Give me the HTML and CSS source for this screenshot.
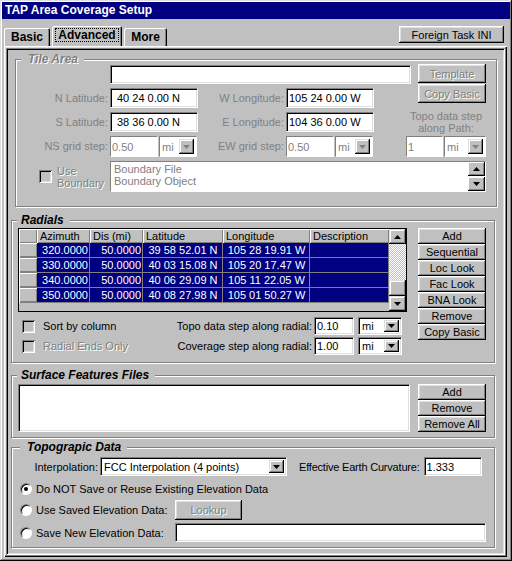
FILE: index.html
```html
<!DOCTYPE html>
<html lang="en">
<head>
    <meta charset="UTF-8">
    <title>TAP Area Coverage Setup</title>
    <link rel="stylesheet" href="styles.css">
</head>
<body>
<div class="window">
    <div class="titlebar">TAP Area Coverage Setup</div>

    <div class="tabbar">
        <div class="tab tab-basic">Basic</div>
        <div class="tab tab-adv active"><span class="focus">Advanced</span></div>
        <div class="tab tab-more">More</div>
        <button class="btn foreign">Foreign Task INI</button>
    </div>

    <div class="tabpage">
        <div class="panel">

            <!-- Tile Area (disabled) -->
            <div class="group tile">
                <div class="group-title off">Tile Area</div>
                <div class="tile-grid">
                    <div class="edit t-top"></div>
                    <button class="btn off t-template">Template</button>
                    <button class="btn off t-copy">Copy Basic</button>

                    <div class="lbl r2 c1">N Latitude:</div>
                    <div class="edit cell-in r2 c2 indent">40 24 0.00 N</div>
                    <div class="lbl r2 c3">W Longitude:</div>
                    <div class="edit cell-in r2 c4">105 24 0.00 W</div>

                    <div class="lbl r3 c1">S Latitude:</div>
                    <div class="edit cell-in r3 c2 indent">38 36 0.00 N</div>
                    <div class="lbl r3 c3">E Longitude:</div>
                    <div class="edit cell-in r3 c4">104 36 0.00 W</div>
                    <div class="t-path-label">Topo data step<br>along Path:</div>

                    <div class="lbl r4 c1">NS grid step:</div>
                    <div class="pair r4 c2">
                        <div class="edit dis w48">0.50</div>
                        <div class="combo dis w38"><span>mi</span><span class="drop"><svg width="7" height="4"><polygon points="0,0 7,0 3.5,4"/></svg></span></div>
                    </div>
                    <div class="lbl r4 c3">EW grid step:</div>
                    <div class="pair r4 c4">
                        <div class="edit dis w48">0.50</div>
                        <div class="combo dis w38"><span>mi</span><span class="drop"><svg width="7" height="4"><polygon points="0,0 7,0 3.5,4"/></svg></span></div>
                    </div>
                    <div class="pair t-path">
                        <div class="edit dis w37">1</div>
                        <div class="combo dis w42"><span>mi</span><span class="drop"><svg width="7" height="4"><polygon points="0,0 7,0 3.5,4"/></svg></span></div>
                    </div>

                    <div class="t-check">
                        <span class="check-box"></span>
                        <span class="emboss two-line">Use<br>Boundary</span>
                    </div>
                    <div class="listbox t-list">
                        <div class="list-lines">
                            <div>Boundary File</div>
                            <div>Boundary Object</div>
                        </div>
                        <div class="spin">
                            <span class="spin-btn"><svg width="7" height="4"><polygon points="0,4 7,4 3.5,0"/></svg></span>
                            <span class="spin-btn"><svg width="7" height="4"><polygon points="0,0 7,0 3.5,4"/></svg></span>
                        </div>
                    </div>
                </div>
            </div>

            <!-- Radials -->
            <div class="group radials">
                <div class="group-title">Radials</div>
                <div class="radials-body">
                    <div class="radials-left">
                        <div class="radial-grid">
                            <div class="grid-cells">
                                <div class="hd"></div><div class="hd">Azimuth</div><div class="hd">Dis (mi)</div><div class="hd">Latitude</div><div class="hd">Longitude</div><div class="hd">Description</div>

                                <div class="rh"></div><div class="cell num">320.0000</div><div class="cell num">50.0000</div><div class="cell mid">39 58 52.01 N</div><div class="cell mid">105 28 19.91 W</div><div class="cell"></div>
                                <div class="rh"></div><div class="cell num">330.0000</div><div class="cell num">50.0000</div><div class="cell mid">40 03 15.08 N</div><div class="cell mid">105 20 17.47 W</div><div class="cell"></div>
                                <div class="rh"></div><div class="cell num">340.0000</div><div class="cell num">50.0000</div><div class="cell mid">40 06 29.09 N</div><div class="cell mid">105 11 22.05 W</div><div class="cell"></div>
                                <div class="rh"></div><div class="cell num">350.0000</div><div class="cell num">50.0000</div><div class="cell mid">40 08 27.98 N</div><div class="cell mid">105 01 50.27 W</div><div class="cell"></div>
                            </div>
                            <div class="vscroll">
                                <span class="sb-btn up"><svg width="7" height="4"><polygon points="0,4 7,4 3.5,0"/></svg></span>
                                <span class="sb-track"></span>
                                <span class="sb-thumb"></span>
                                <span class="sb-btn down"><svg width="7" height="4"><polygon points="0,0 7,0 3.5,4"/></svg></span>
                            </div>
                        </div>

                        <div class="opt-row">
                            <div class="check"><span class="check-box"></span><span>Sort by column</span></div>
                            <span class="opt-label">Topo data step along radial:</span>
                            <div class="edit w40">0.10</div>
                            <div class="combo w44"><span>mi</span><span class="drop"><svg width="7" height="4"><polygon points="0,0 7,0 3.5,4"/></svg></span></div>
                        </div>
                        <div class="opt-row">
                            <div class="check"><span class="check-box"></span><span class="emboss">Radial Ends Only</span></div>
                            <span class="opt-label">Coverage step along radial:</span>
                            <div class="edit w40">1.00</div>
                            <div class="combo w44"><span>mi</span><span class="drop"><svg width="7" height="4"><polygon points="0,0 7,0 3.5,4"/></svg></span></div>
                        </div>
                    </div>

                    <div class="btn-stack">
                        <button class="btn">Add</button>
                        <button class="btn">Sequential</button>
                        <button class="btn">Loc Look</button>
                        <button class="btn">Fac Look</button>
                        <button class="btn">BNA Look</button>
                        <button class="btn">Remove</button>
                        <button class="btn">Copy Basic</button>
                    </div>
                </div>
            </div>

            <!-- Surface Features Files -->
            <div class="group surface">
                <div class="group-title">Surface Features Files</div>
                <div class="surface-body">
                    <div class="edit surface-list"></div>
                    <div class="btn-stack">
                        <button class="btn">Add</button>
                        <button class="btn">Remove</button>
                        <button class="btn">Remove All</button>
                    </div>
                </div>
            </div>

            <!-- Topographic Data -->
            <div class="group topo">
                <div class="group-title topo-title">Topograpic Data</div>
                <div class="topo-row">
                    <span class="interp-label">Interpolation:</span>
                    <div class="combo w187"><span>FCC Interpolation (4 points)</span><span class="drop"><svg width="7" height="4"><polygon points="0,0 7,0 3.5,4"/></svg></span></div>
                    <span class="curv-label">Effective Earth Curvature:</span>
                    <div class="edit w58">1.333</div>
                </div>
                <div class="radio-row r-first">
                    <span class="radio on"></span>
                    <span>Do NOT Save or Reuse Existing Elevation Data</span>
                </div>
                <div class="radio-row r-second">
                    <span class="radio"></span>
                    <span class="radio-label">Use Saved Elevation Data:</span>
                    <button class="btn off lookup">Lookup</button>
                </div>
                <div class="radio-row r-third">
                    <span class="radio"></span>
                    <span class="radio-label">Save New Elevation Data:</span>
                    <div class="edit w311 save-path"></div>
                </div>
            </div>

        </div>
    </div>
</div>
</body>
</html>
```

FILE: styles.css
```css
* {
    box-sizing: border-box;
}

body {
    margin: 0;
    background-color: #c0c0c0;
    font-family: "Liberation Sans", Arial, sans-serif;
    font-size: 11px;
    color: #000;
}

/* window frame */
.window {
    width: 512px;
    height: 561px;
    padding: 2px;
    background-color: #c0c0c0;
    box-shadow: inset -1px -1px #000, inset 1px 1px #dfdfdf, inset -2px -2px #808080, inset 2px 2px #fff;
}

.titlebar {
    height: 17px;
    line-height: 17px;
    padding-left: 3px;
    background-color: #000080;
    color: #fff;
    font-weight: bold;
    font-size: 12px;
}

/* tabs */
.tabbar {
    display: flex;
    align-items: flex-end;
    gap: 2px;
    height: 27px;
    padding-left: 2px;
    padding-right: 6px;
}

.tab {
    height: 18px;
    line-height: 19px;
    text-align: center;
    font-weight: bold;
    font-size: 12px;
    border-radius: 2px 2px 0 0;
    box-shadow: inset 1px 1px #fff, inset -1px 0 #000, inset -2px 0 #808080;
}

.tab-basic { width: 46px; }
.tab-adv { width: 70px; }
.tab-more { width: 43px; }

.tab.active {
    height: 20px;
    line-height: 19px;
}

.focus {
    display: inline-block;
    line-height: 12px;
    padding: 0 2px;
    outline: 1px dotted #000;
}

.btn {
    font-family: "Liberation Sans", Arial, sans-serif;
    font-size: 11px;
    font-weight: normal;
    color: #000;
    background-color: #c0c0c0;
    border: none;
    padding: 0;
    box-shadow: inset -1px -1px #000, inset 1px 1px #fff, inset -2px -2px #808080, inset 2px 2px #dfdfdf;
}

.btn.off,
.emboss,
.group-title.off {
    color: #808080;
    text-shadow: 1px 1px #fff;
}

.foreign {
    margin-left: auto;
    align-self: flex-start;
    margin-top: 7px;
    width: 105px;
    height: 17px;
}

/* tab page */
.tabpage {
    height: 511px;
    margin: 0 3px 0 2px;
    padding: 2px;
    box-shadow: inset 1px 1px #fff, inset -1px -1px #000, inset -2px -2px #808080, inset 2px 2px #dfdfdf;
}

.panel {
    height: 100%;
    padding: 2px;
    box-shadow: inset 1px 1px #808080, inset -1px -1px #fff, inset 2px 2px #000, inset -2px -2px #dfdfdf;
}

/* group boxes */
.group {
    border: 1px solid #808080;
    box-shadow: inset 1px 1px #fff, 1px 1px #fff;
}

.group-title {
    width: max-content;
    height: 14px;
    line-height: 14px;
    margin: -8px 0 -6px 5px;
    padding: 0 6px 0 4px;
    background-color: #c0c0c0;
    font-weight: bold;
    font-style: italic;
    font-size: 12px;
}

.tile {
    height: 148px;
    margin: 9px 6px 0 7px;
}

.tile .group-title {
    padding-left: 7px;
}

.radials {
    height: 143px;
    margin: 13px 8px 0 3px;
}

.surface {
    height: 63px;
    margin: 12px 8px 0 3px;
}

.topo {
    height: 101px;
    margin: 9px 8px 0 3px;
}

.topo .topo-title {
    margin-left: 8px;
    padding-left: 7px;
}

/* edit boxes */
.edit {
    display: flex;
    align-items: center;
    padding: 0 2px;
    background-color: #fff;
    border: 1px solid;
    border-color: #808080 #fff #fff #808080;
    box-shadow: inset 1px 1px #000, inset -1px -1px #dfdfdf;
    white-space: nowrap;
}

.edit.indent {
    padding-left: 6px;
}

.edit.dis {
    color: #808080;
    padding-left: 1px;
    box-shadow: none;
}

.combo {
    display: flex;
    align-items: center;
    justify-content: space-between;
    padding: 0 2px 0 3px;
    background-color: #fff;
    border: 1px solid;
    border-color: #808080 #fff #fff #808080;
    box-shadow: inset 1px 1px #000, inset -1px -1px #dfdfdf;
    white-space: nowrap;
}

.combo.dis {
    color: #808080;
    box-shadow: none;
    padding-left: 2px;
}

.drop {
    display: flex;
    align-items: center;
    justify-content: center;
    width: 15px;
    height: calc(100% - 4px);
    background-color: #c0c0c0;
    box-shadow: inset -1px -1px #000, inset 1px 1px #dfdfdf, inset -2px -2px #808080, inset 2px 2px #fff;
}

.drop svg {
    fill: #000;
}

.combo.dis .drop svg {
    fill: #808080;
}

.w37 { width: 37px; }
.w38 { width: 38px; }
.w40 { width: 40px; }
.w42 { width: 42px; }
.w44 { width: 44px; }
.w48 { width: 48px; }
.w58 { width: 58px; }
.w187 { width: 187px; }
.w311 { width: 311px; }

/* tile area grid */
.tile-grid {
    display: grid;
    grid-template-columns: 94px 88px 88px 88px 37px 7px 68px;
    grid-template-rows: 20px 24px 24px 25px 35px;
    padding-top: 4px;
}

.r2 { grid-row: 2; }
.r3 { grid-row: 3; }
.r4 { grid-row: 4; }
.c1 { grid-column: 1; }
.c2 { grid-column: 2; }
.c3 { grid-column: 3; }
.c4 { grid-column: 4; }

.t-top {
    grid-column: 2 / 6;
    grid-row: 1;
    margin-top: 1px;
    height: 19px;
}

.t-template {
    grid-column: 7;
    grid-row: 1;
    height: 19px;
}

.t-copy {
    grid-column: 7;
    grid-row: 2;
    height: 19px;
}

.lbl {
    display: flex;
    align-items: center;
    justify-content: flex-end;
    padding-right: 2px;
    margin-top: 4px;
    height: 20px;
    color: #808080;
    white-space: nowrap;
}

.cell-in {
    margin-top: 4px;
    height: 20px;
}

.pair {
    display: flex;
    gap: 1px;
    margin-top: 4px;
    height: 21px;
}

.t-path-label {
    grid-column: 6 / 8;
    grid-row: 3;
    margin-left: -5px;
    padding-top: 2px;
    text-align: center;
    line-height: 12px;
    color: #808080;
}

.t-path {
    grid-column: 6 / 8;
    grid-row: 4;
    margin-left: -5px;
}

.t-check {
    grid-column: 1;
    grid-row: 5;
    display: flex;
    align-items: center;
    gap: 5px;
    padding-left: 23px;
    padding-top: 4px;
}

.two-line {
    line-height: 12px;
}

.check-box {
    flex: none;
    width: 13px;
    height: 13px;
    background-color: #c0c0c0;
    box-shadow: inset 1px 1px #808080, inset -1px -1px #fff, inset 2px 2px #000, inset -2px -2px #dfdfdf;
}

.listbox {
    display: flex;
    justify-content: space-between;
    margin-top: 4px;
    height: 31px;
    background-color: #fff;
    border: 1px solid;
    border-color: #808080 #fff #fff #808080;
}

.t-list {
    grid-column: 2 / 8;
    grid-row: 5;
}

.list-lines {
    padding: 1px 0 0 3px;
    line-height: 12px;
    color: #808080;
}

.spin {
    display: flex;
    flex-direction: column;
    justify-content: space-between;
    width: 17px;
}

.spin-btn {
    display: flex;
    align-items: center;
    justify-content: center;
    height: 14px;
    background-color: #c0c0c0;
    box-shadow: inset -1px -1px #000, inset 1px 1px #fff, inset -2px -2px #808080;
}

/* radials */
.radials-body {
    display: flex;
    padding: 7px 0 0 6px;
}

.radials-left {
    width: 389px;
}

.radial-grid {
    display: flex;
    height: 84px;
    border: 1px solid #000;
}

.grid-cells {
    display: grid;
    grid-template-columns: 18px 53px 53px 80px 87px 79px;
    grid-template-rows: 14px repeat(4, 15px);
    align-content: start;
    width: 370px;
    background-color: #c0c0c0;
}

.hd,
.rh {
    padding-left: 3px;
    line-height: 14px;
    white-space: nowrap;
    box-shadow: inset 1px 1px #fff, inset -1px -1px #808080;
}

.rh {
    box-shadow: inset 1px 1px #fff, inset -1px -1px #808080, inset -1px -2px #808080;
}

.cell {
    padding: 0 2px;
    line-height: 15px;
    background-color: #000080;
    color: #fff;
    white-space: nowrap;
    box-shadow: inset -1px -1px #808080;
}

.cell.num {
    text-align: right;
}

.cell.mid {
    text-align: center;
}

.vscroll {
    display: flex;
    flex-direction: column;
    width: 17px;
}

.sb-btn,
.sb-thumb {
    display: flex;
    align-items: center;
    justify-content: center;
    background-color: #c0c0c0;
    box-shadow: inset -1px -1px #000, inset 1px 1px #dfdfdf, inset -2px -2px #808080, inset 2px 2px #fff;
}

.sb-btn {
    height: 15px;
}

.sb-thumb {
    height: 16px;
}

.sb-track {
    flex: 1;
    background: repeating-conic-gradient(#fff 0 25%, #c0c0c0 0 50%) 0 0 / 2px 2px;
}

.opt-row {
    display: flex;
    align-items: center;
    gap: 4px;
    height: 18px;
    margin-top: 2px;
    padding-right: 5px;
}

.radial-grid + .opt-row {
    margin-top: 5px;
}

.opt-row .edit,
.opt-row .combo {
    height: 18px;
}

.check {
    flex: 1;
    display: flex;
    align-items: center;
    gap: 8px;
    padding-left: 4px;
}

.opt-label {
    margin-right: -2px;
}

.btn-stack {
    display: flex;
    flex-direction: column;
    width: 68px;
    margin-left: 11px;
}

.btn-stack .btn {
    height: 16px;
}

/* surface */
.surface-body {
    display: flex;
    padding: 8px 0 0 6px;
}

.surface-list {
    width: 392px;
    height: 48px;
}

.surface-body .btn-stack {
    margin-left: 8px;
}

/* topographic */
.topo-row {
    display: flex;
    align-items: center;
    height: 19px;
    margin-top: 9px;
}

.topo-row .combo,
.topo-row .edit {
    height: 19px;
}

.interp-label {
    width: 88px;
    padding-right: 2px;
    text-align: right;
}

.curv-label {
    margin: 0 4px 0 12px;
    white-space: nowrap;
    letter-spacing: -0.2px;
}

.radio-row {
    display: flex;
    align-items: center;
    gap: 4px;
    padding-left: 8px;
}

.r-first {
    height: 18px;
    margin-top: 4px;
}

.r-second {
    height: 20px;
    margin-top: 2px;
}

.r-third {
    height: 19px;
    margin-top: 3px;
}

.radio-label {
    width: 135px;
}

.radio {
    display: flex;
    align-items: center;
    justify-content: center;
    flex: none;
    width: 12px;
    height: 12px;
    border-radius: 50%;
    background-color: #fff;
    border: 1px solid;
    border-color: #808080 #fff #fff #808080;
    box-shadow: inset 1px 1px #000;
}

.radio.on::after {
    content: "";
    width: 4px;
    height: 4px;
    border-radius: 50%;
    background-color: #000;
}

.lookup {
    width: 67px;
    height: 20px;
}

.save-path {
    height: 19px;
}
```
